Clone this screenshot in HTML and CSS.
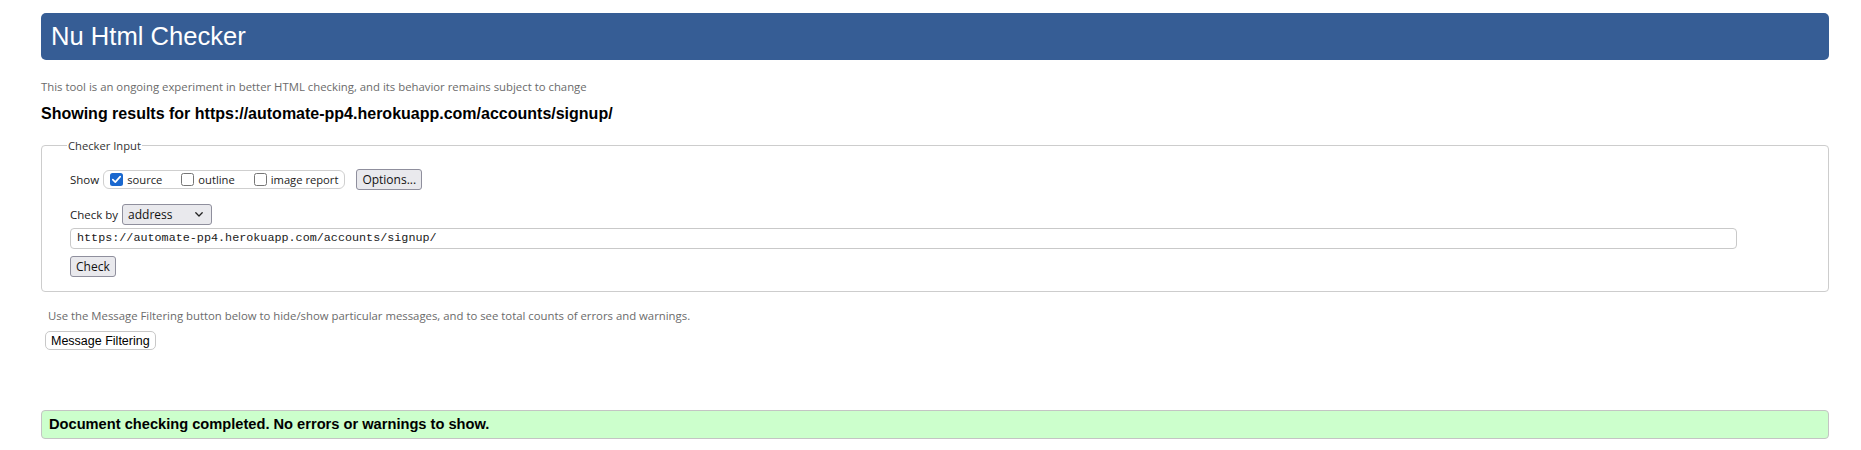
FILE: index.html
```html
<!DOCTYPE html>
<html lang="en">
<head>
<meta charset="utf-8">
<title>Nu Html Checker</title>
<link rel="stylesheet" href="styles.css">
</head>
<body>
<h1 class="title">Nu Html Checker</h1>
<p class="tagline">This tool is an ongoing experiment in better HTML checking, and its behavior remains subject to change</p>
<h2 class="results">Showing results for https://automate-pp4.herokuapp.com/accounts/signup/</h2>
<form class="checker">
  <fieldset class="input-set">
    <legend class="legend">Checker Input</legend>
    <div class="row show-row">
      <span class="label">Show</span>
      <div class="show-group">
        <label class="opt"><span class="box checked"><svg width="13" height="13" viewBox="0 0 13 13"><path d="M2.8 6.6 L5.3 9.1 L10.2 3.6" fill="none" stroke="#fff" stroke-width="1.7" stroke-linecap="round" stroke-linejoin="round"/></svg></span>source</label>
        <label class="opt"><span class="box"></span>outline</label>
        <label class="opt"><span class="box"></span>image report</label>
      </div>
      <button type="button" class="btn options">Options...</button>
    </div>
    <div class="row by-row">
      <span class="label">Check by</span>
      <div class="select"><span class="select-text">address</span><svg class="chev" width="8" height="5" viewBox="0 0 8 5"><polyline points="0.8,0.8 4,4 7.2,0.8" fill="none" stroke="#222" stroke-width="1.3" stroke-linecap="round" stroke-linejoin="round"/></svg></div>
    </div>
    <div class="url">https://automate-pp4.herokuapp.com/accounts/signup/</div>
    <div class="submit-row"><button type="button" class="btn check">Check</button></div>
  </fieldset>
</form>
<p class="hint">Use the Message Filtering button below to hide/show particular messages, and to see total counts of errors and warnings.</p>
<div class="filter-row"><button type="button" class="filter">Message Filtering</button></div>
<div class="success">Document checking completed. No errors or warnings to show.</div>
</body>
</html>
```
FILE: styles.css
```css
html, body {
  margin: 0;
  background: #fff;
}
body {
  padding: 13px 32px 0 41px;
  font-family: "Open Sans", "Noto Sans", sans-serif;
  color: #222;
}
.title {
  margin: 0;
  height: 47px;
  box-sizing: border-box;
  display: flex;
  align-items: center;
  padding: 0 10px;
  background: #365d95;
  color: #fff;
  border-radius: 5px;
  font-family: "Liberation Sans", Arial, sans-serif;
  font-weight: normal;
  font-size: 25.6px;
  line-height: 29px;
}
.tagline {
  margin: 20px 0 0;
  font-size: 11.35px;
  line-height: 14px;
  color: #6b6b6b;
}
.results {
  margin: 10.5px 0 0;
  font-family: "Liberation Sans", Arial, sans-serif;
  font-weight: bold;
  font-size: 16px;
  line-height: 18px;
  color: #000;
}
.checker {
  margin: 15px 0 0;
}
.input-set {
  margin: 0;
  padding: 0 28px 14.5px;
  border: 1px solid #cdcdcd;
  border-radius: 4px;
}
.legend {
  margin-left: -3px;
  padding: 0 1px;
  font-size: 11.2px;
  line-height: 16px;
  color: #333;
}
.row {
  display: flex;
  align-items: center;
  height: 21px;
}
.show-row {
  margin-top: 15px;
}
.by-row {
  margin-top: 14px;
}
.label {
  font-size: 11.5px;
  margin-right: 4px;
  color: #222;
}
.show-group {
  display: flex;
  align-items: center;
  height: 19px;
  box-sizing: border-box;
  padding: 0 6px;
  border: 1px solid #cfcfcf;
  border-radius: 6px;
}
.opt {
  display: flex;
  align-items: center;
  font-size: 11.2px;
  margin-right: 19px;
  color: #222;
}
.opt:last-child {
  margin-right: 0;
}
.box {
  width: 13px;
  height: 13px;
  box-sizing: border-box;
  border: 1px solid #767676;
  border-radius: 2.5px;
  background: #fff;
  margin-right: 4px;
  display: flex;
}
.box.checked {
  border: none;
  background: #1a68cf;
}
.btn {
  height: 21px;
  box-sizing: border-box;
  padding: 0 5px;
  font-family: "Open Sans", "Noto Sans", sans-serif;
  font-size: 12px;
  color: #111;
  background: #e9e9ed;
  border: 1px solid #8f8f9d;
  border-radius: 3px;
}
.options {
  margin-left: 11px;
}
.select {
  width: 90px;
  height: 21px;
  box-sizing: border-box;
  display: flex;
  align-items: center;
  justify-content: space-between;
  padding: 0 8px 0 5px;
  background: #e9e9ed;
  border: 1px solid #8f8f9d;
  border-radius: 3px;
  font-size: 12px;
  color: #111;
}
.url {
  margin-top: 3px;
  width: calc(100% - 63px);
  height: 21.5px;
  box-sizing: border-box;
  display: flex;
  align-items: center;
  padding: 0 6px;
  border: 1px solid #c9c9c9;
  border-radius: 4px;
  font-family: "Liberation Mono", "Courier New", monospace;
  font-size: 11.75px;
  color: #1a1a1a;
}
.submit-row {
  margin-top: 6.5px;
  display: flex;
}
.hint {
  margin: 16.5px 0 0 7px;
  font-size: 11.35px;
  line-height: 14px;
  color: #6b6b6b;
}
.filter-row {
  display: flex;
  margin: 8.5px 0 0 4px;
}
.filter {
  height: 19px;
  box-sizing: border-box;
  padding: 0 5px;
  background: #fff;
  border: 1px solid #c8c8c8;
  border-radius: 5px;
  font-family: "Liberation Sans", Arial, sans-serif;
  font-size: 12.5px;
  color: #000;
}
.success {
  margin-top: 59.5px;
  padding: 5px 7px;
  background: #ccffcc;
  border: 1px solid #c4c4c4;
  border-radius: 4px;
  font-family: "Liberation Sans", Arial, sans-serif;
  font-weight: bold;
  font-size: 14.65px;
  line-height: 17px;
  color: #000;
}
```
